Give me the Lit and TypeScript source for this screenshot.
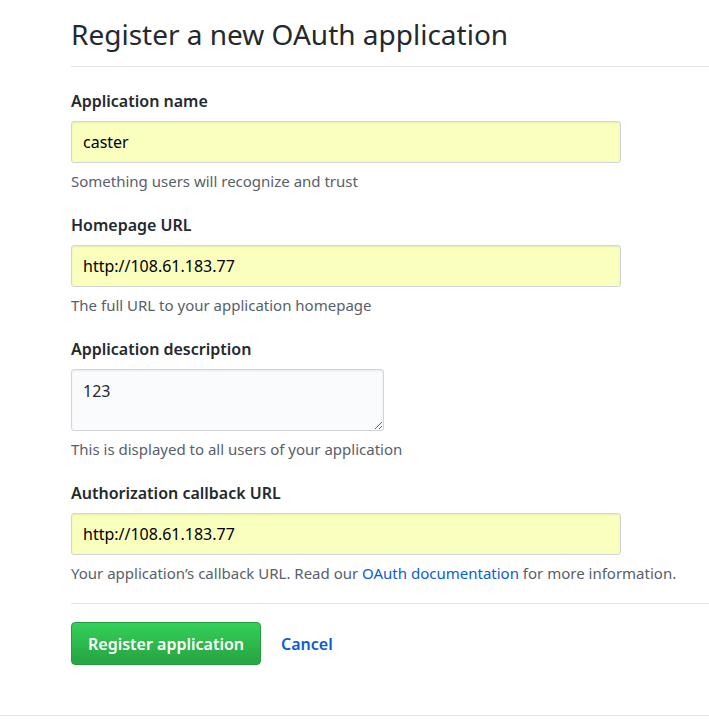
import { LitElement, html, css } from "lit";
import { customElement } from "lit/decorators.js";

@customElement("app-root")
class AppRoot extends LitElement {
  static styles = css`
    :host {
      display: block;
      background: #fff;
      color: #24292e;
      font: 16px/24px "Segoe UI", "Noto Sans", "Open Sans", sans-serif;
      overflow-x: hidden;
    }
    * { box-sizing: border-box; }
    main { padding: 14px 0 50px 71px; border-bottom: 1px solid #e1e4e8; }
    h1 {
      margin: 0 0 22px;
      padding-bottom: 12px;
      border-bottom: 1px solid #e1e4e8;
      font-size: 28px;
      line-height: 40px;
      font-weight: 400;
      white-space: nowrap;
    }
    .field { margin-bottom: 20px; }
    .field:last-of-type { margin-bottom: 18px; }
    label { display: block; margin-bottom: 8px; font-weight: 600; }
    input, textarea {
      display: block;
      width: 550px;
      max-width: calc(100% - 16px);
      height: 42px;
      margin: 0;
      padding: 2px 11px;
      border: 1px solid #d1d5da;
      border-radius: 3px;
      background: #faffbd;
      box-shadow: inset 0 1px 2px rgba(27, 31, 35, 0.08);
      color: #000;
      font: inherit;
      outline: none;
    }
    textarea {
      width: 313px;
      height: 62px;
      padding: 9px 11px;
      background-color: #fafbfc;
      color: #24292e;
      resize: both;
    }
    p { margin: 6px 0 0; font-size: 15px; color: #586069; white-space: nowrap; }
    a { color: #0a5cd6; text-decoration: none; }
    .actions {
      display: flex;
      align-items: center;
      gap: 20px;
      padding-top: 18px;
      border-top: 1px solid #e1e4e8;
    }
    button {
      height: 43px;
      padding: 0 16px;
      border: 1px solid #259a3e;
      border-radius: 4px;
      background: linear-gradient(#34d058, #28a745 90%);
      color: #fff;
      font: inherit;
      font-weight: 600;
    }
    .cancel { font-weight: 600; }
  `;

  render() {
    return html`<main>
      <h1>Register a new OAuth application</h1>
      <form @submit=${(e: Event) => e.preventDefault()}>
        <div class="field">
          <label for="name">Application name</label>
          <input id="name" type="text" value="caster" />
          <p>Something users will recognize and trust</p>
        </div>
        <div class="field">
          <label for="home">Homepage URL</label>
          <input id="home" type="text" value="http://108.61.183.77" />
          <p>The full URL to your application homepage</p>
        </div>
        <div class="field">
          <label for="description">Application description</label>
          <textarea id="description" .value=${"123"}></textarea>
          <p>This is displayed to all users of your application</p>
        </div>
        <div class="field">
          <label for="callback">Authorization callback URL</label>
          <input id="callback" type="text" value="http://108.61.183.77" />
          <p>Your application’s callback URL. Read our <a href="#docs">OAuth documentation</a> for more information.</p>
        </div>
        <footer class="actions">
          <button type="submit">Register application</button>
          <a class="cancel" href="#cancel">Cancel</a>
        </footer>
      </form>
    </main>`;
  }
}
